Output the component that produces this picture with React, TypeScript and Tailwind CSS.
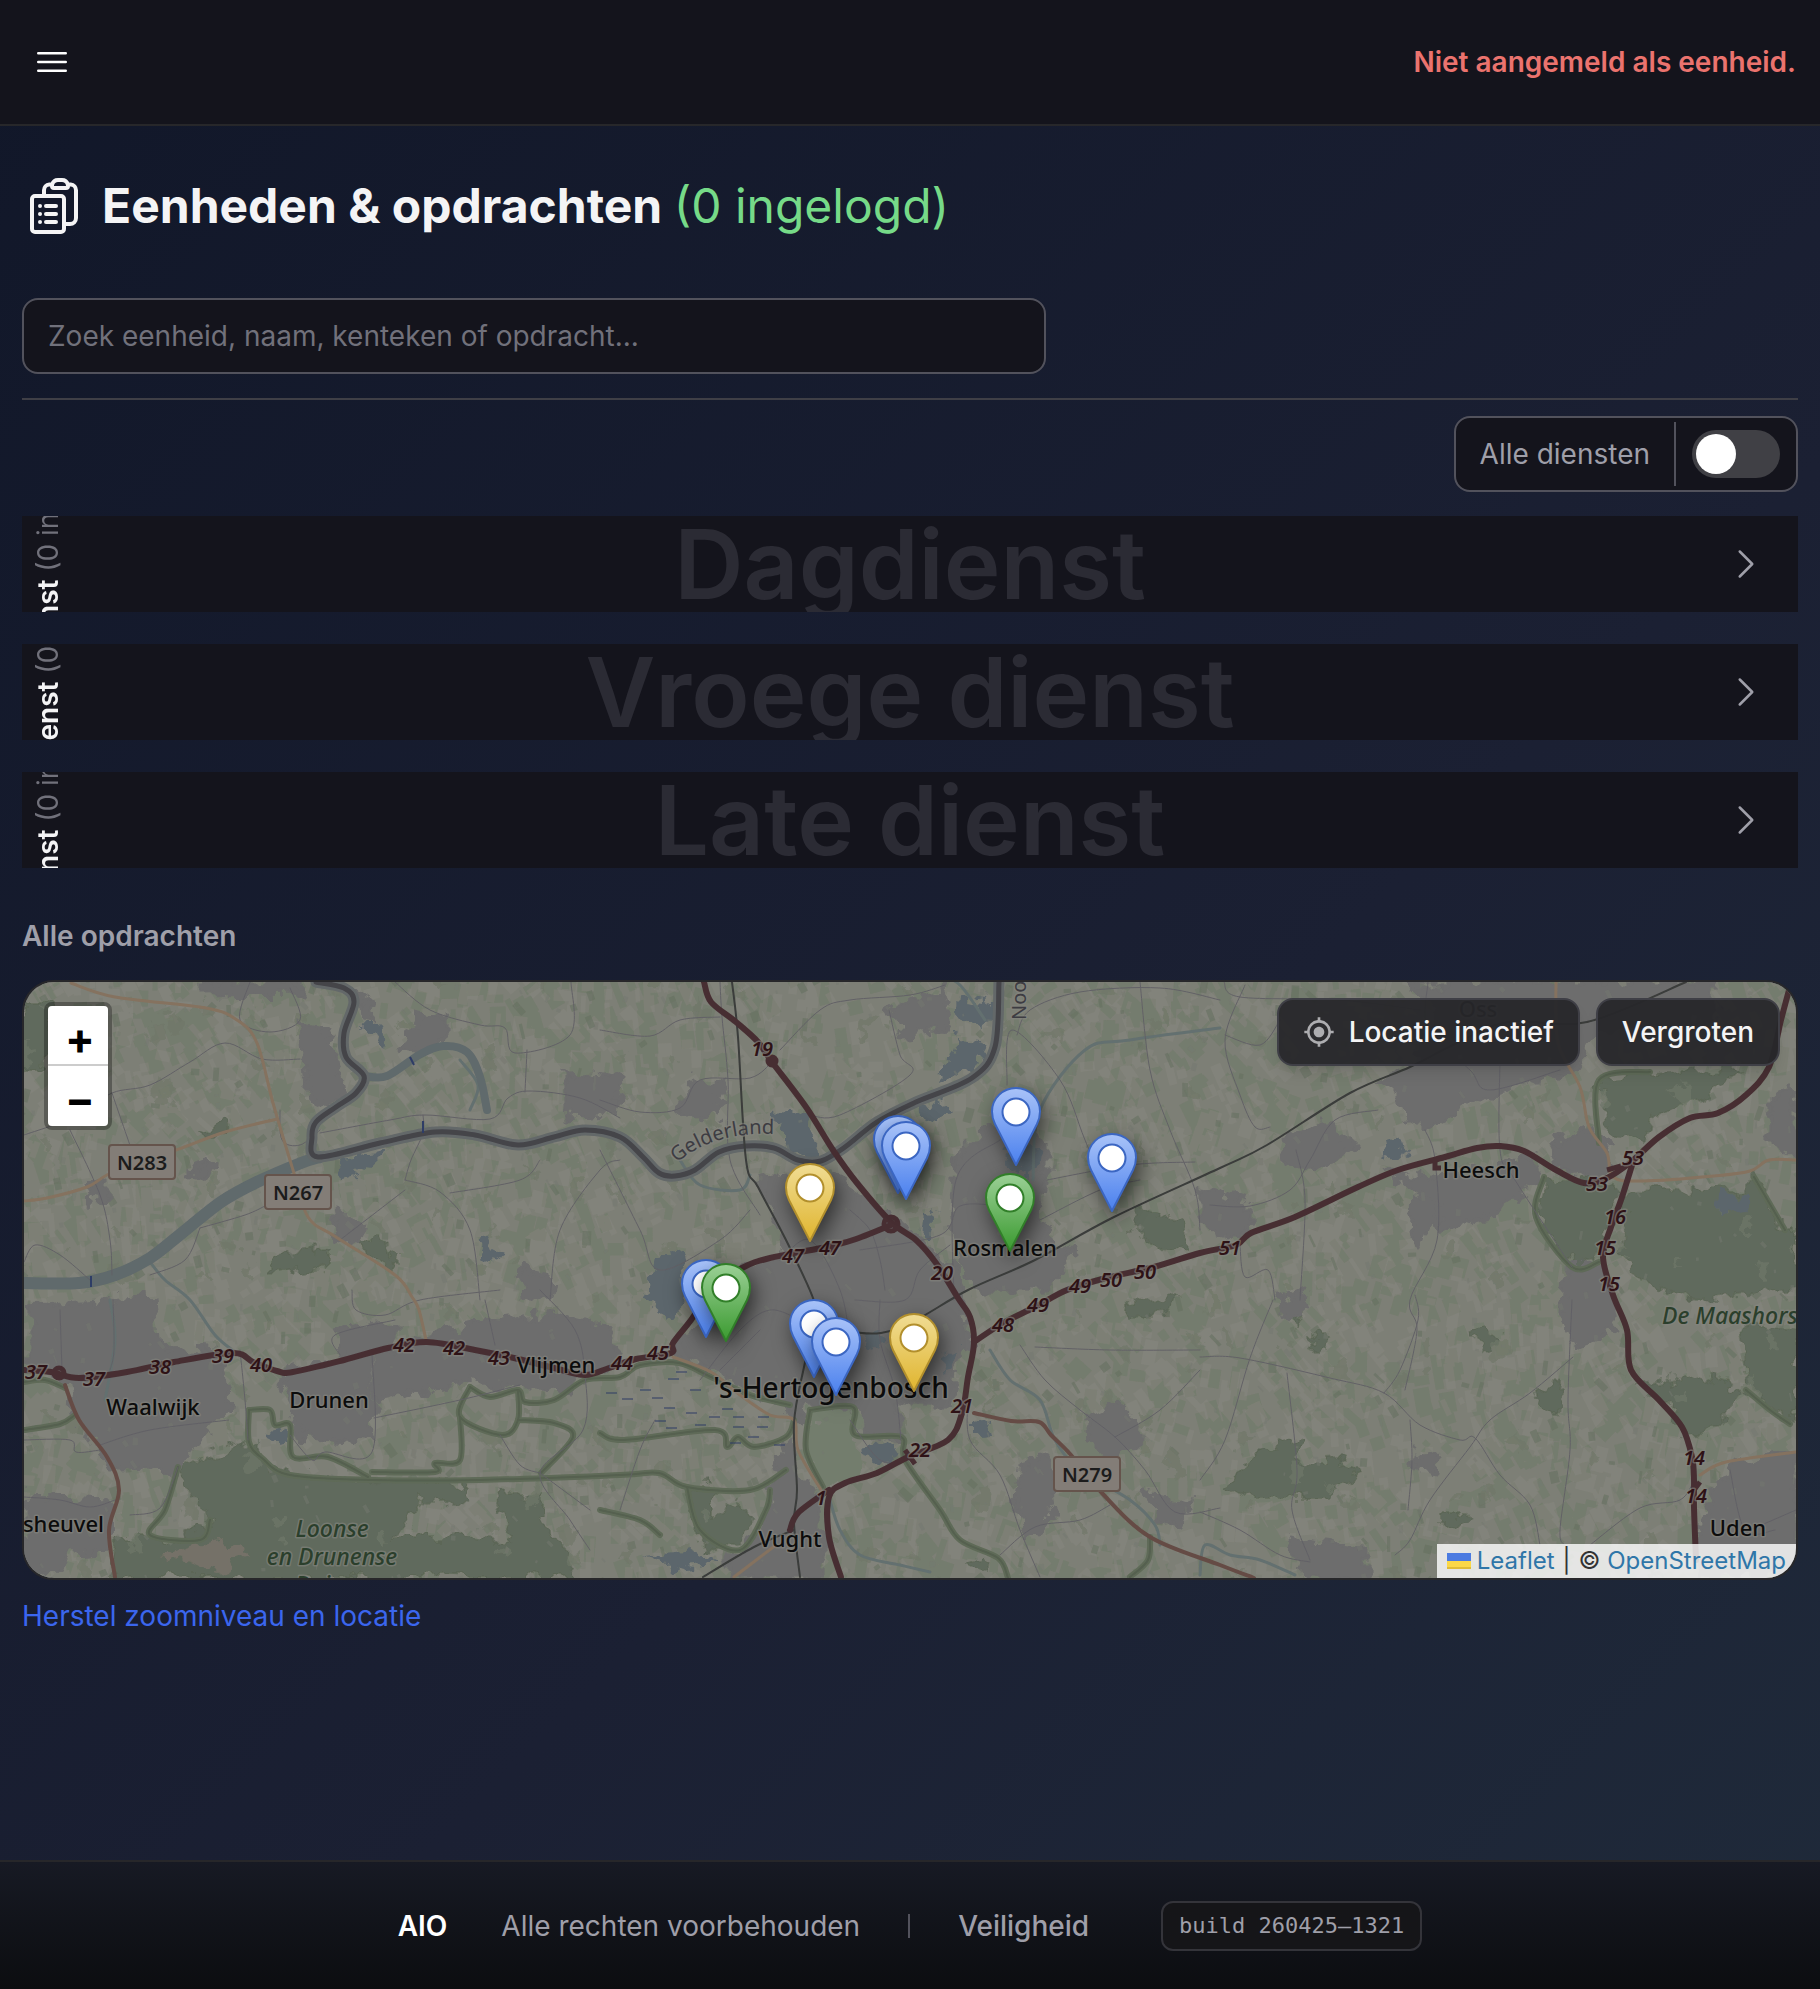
import { useState } from "react";
import {
  HiOutlineBars3,
  HiOutlineChevronRight,
  HiOutlineClipboardDocumentList,
} from "react-icons/hi2";
import { MdMyLocation } from "react-icons/md";

type Pt = [number, number];

/* The map is drawn in its own coordinate space; pins share the same space. */
const MAP = { x: 24, y: 982, w: 1772, h: 596 };

function pts(s: string): Pt[] {
  return s
    .trim()
    .split(/\s+/)
    .map((p) => p.split(",").map(Number) as Pt);
}

/* Catmull-Rom spline through the given points. */
function curve(s: string): string {
  const p = pts(s);
  let d = `M${p[0][0]} ${p[0][1]}`;
  for (let i = 0; i < p.length - 1; i++) {
    const a = p[Math.max(0, i - 1)];
    const b = p[i];
    const c = p[i + 1];
    const e = p[Math.min(p.length - 1, i + 2)];
    const x1 = b[0] + (c[0] - a[0]) / 6;
    const y1 = b[1] + (c[1] - a[1]) / 6;
    const x2 = c[0] - (e[0] - b[0]) / 6;
    const y2 = c[1] - (e[1] - b[1]) / 6;
    d += `C${x1.toFixed(1)} ${y1.toFixed(1)} ${x2.toFixed(1)} ${y2.toFixed(1)} ${c[0]} ${c[1]}`;
  }
  return d;
}

function rng(seed: number) {
  let s = seed;
  return () => {
    s = (s * 1664525 + 1013904223) % 4294967296;
    return s / 4294967296;
  };
}

/* Patchwork of farm fields: strips of small parcels, rotated per block. */
function makeFields(seed: number, density: number, scale: number): string {
  const r = rng(seed);
  let d = "";
  for (let by = MAP.y - 20; by < MAP.y + MAP.h + 20; by += 48) {
    for (let bx = MAP.x - 20; bx < MAP.x + MAP.w + 20; bx += 54) {
      const ang = (r() - 0.5) * 1.2 - 0.25;
      const c = Math.cos(ang);
      const n = Math.sin(ang);
      const count = Math.floor(density * (0.4 + r()));
      for (let i = 0; i < count; i++) {
        const ox = bx + r() * 54;
        const oy = by + r() * 48;
        const w = (4 + r() * 11) * scale;
        const h = (6 + r() * 20) * scale;
        const q = [
          [0, 0],
          [w, 0],
          [w, h],
          [0, h],
        ].map(([x, y]) => `${(ox + x * c - y * n).toFixed(1)} ${(oy + x * n + y * c).toFixed(1)}`);
        d += `M${q.join("L")}Z`;
      }
    }
  }
  return d;
}

const greenFields = makeFields(11, 9, 1.1);
const lightFields = makeFields(47, 9, 1);
const darkFields = makeFields(83, 1.7, 0.6);
const houseSpecks = makeFields(29, 2, 0.35);
const groveSpecks = makeFields(61, 1.2, 0.9);

const urban = [
  "31,1307 158,1297 162,1347 221,1353 229,1407 174,1470 119,1472 71,1413 65,1377 31,1367",
  "24,1497 111,1500 107,1550 70,1552 60,1570 24,1573",
  "277,1373 372,1353 374,1443 300,1437 293,1417 285,1390",
  "336,1330 395,1323 395,1350 340,1357",
  "443,1330 554,1313 605,1327 620,1357 593,1373 561,1393 522,1390 467,1380 376,1400 376,1357",
  "758,1177 821,1170 891,1217 924,1243 956,1270 970,1340 956,1373 952,1403 901,1403 901,1437 869,1440 853,1407 810,1407 798,1423 758,1390 711,1370 675,1360 679,1343 711,1303 740,1270 785,1250",
  "956,1157 991,1120 1047,1137 1047,1183 1039,1223 1071,1253 1047,1290 980,1290 956,1263 952,1203",
  "679,1110 695,1080 723,1083 715,1113 690,1122",
  "889,1010 944,987 952,1030 901,1033",
  "1406,982 1714,982 1714,1022 1595,1030 1580,1067 1493,1093 1425,1130 1378,1083 1410,1067 1440,1010",
  "1386,1173 1429,1180 1536,1157 1540,1183 1489,1217 1437,1227 1429,1203",
  "1283,1137 1327,1120 1354,1147 1319,1170 1287,1167",
  "1200,1187 1251,1203 1251,1230 1224,1240 1200,1220",
  "1556,1140 1591,1127 1611,1157 1595,1183 1556,1165",
  "1769,1097 1796,1087 1796,1157 1769,1143",
  "1564,1267 1600,1265 1619,1330 1576,1347 1560,1317",
  "1710,1497 1730,1463 1796,1453 1796,1577 1698,1577 1698,1543",
  "1291,1540 1330,1545 1366,1547 1366,1577 1303,1577",
  "1019,1467 1051,1457 1055,1507 1031,1537 1015,1503",
  "1086,1417 1118,1403 1146,1437 1114,1463 1088,1443",
  "1142,1490 1190,1505 1180,1525 1155,1515",
  "794,1470 821,1497 821,1577 734,1577 727,1560 766,1523 770,1490 786,1437",
  "301,1023 328,1027 344,1097 320,1110 304,1077",
  "356,990 376,1007 372,1023 358,1020",
  "415,1013 447,1017 447,1037 420,1052 399,1050",
  "565,1077 600,1074 620,1080 617,1113 565,1117",
  "190,1167 221,1157 221,1170 190,1180",
  "332,1210 364,1227 360,1243 336,1237",
  "87,1183 107,1180 107,1203 91,1200",
  "522,1270 554,1277 550,1297 524,1300",
  "202,982 300,982 300,995 202,996",
  "1412,1197 1440,1200 1420,1250 1410,1235",
  "1416,1452 1440,1455 1438,1475 1414,1470",
  "1280,1300 1305,1290 1310,1310 1285,1322",
];

const forest = [
  "178,1467 249,1442 277,1470 372,1480 474,1483 470,1503 420,1500 410,1520 395,1537 455,1537 514,1543 494,1493 538,1497 538,1523 561,1540 577,1577 111,1577 115,1540 170,1540 213,1523 205,1505 190,1497",
  "1544,1177 1611,1183 1615,1207 1599,1260 1572,1267 1536,1217",
  "1627,1187 1742,1190 1754,1177 1785,1230 1796,1230 1796,1290 1700,1300 1640,1280 1620,1250",
  "1635,1387 1700,1375 1746,1390 1730,1410 1710,1433 1690,1435 1668,1405",
  "1740,1320 1796,1330 1796,1423 1770,1410 1746,1380",
  "1599,1080 1742,1067 1702,1100 1651,1117 1647,1143 1610,1140",
  "1259,1450 1298,1440 1298,1462 1338,1460 1358,1477 1327,1497 1255,1497 1228,1487",
  "273,1257 328,1247 328,1267 273,1273",
  "356,1240 376,1240 399,1257 395,1268 370,1256",
  "24,1003 51,1003 47,1070 24,1070",
  "1140,1210 1180,1220 1190,1245 1160,1250 1135,1235",
  "1470,1330 1492,1327 1500,1342 1485,1352",
  "1310,1333 1326,1333 1320,1355 1312,1352",
  "1535,1390 1560,1385 1558,1415 1540,1408",
  "1440,1512 1468,1512 1465,1527 1440,1522",
  "200,1130 222,1122 225,1135 207,1140",
  "687,1490 712,1488 712,1518 740,1500 752,1520 730,1548 706,1550 690,1520",
  "1130,1302 1178,1298 1168,1316 1128,1318",
  "1290,1310 1302,1308 1296,1330",
  "970,1560 992,1556 990,1574 972,1570",
];

const water = [
  "774,1112 800,1110 812,1122 806,1135 818,1150 810,1160 790,1155 786,1135",
  "960,997 985,1000 993,1018 985,1030 958,1025",
  "956,1036 980,1038 987,1055 970,1072 942,1078",
  "922,1105 945,1100 950,1110 935,1127 920,1118",
  "655,1255 680,1250 690,1290 671,1322 646,1300",
  "859,1447 893,1442 900,1457 873,1467",
  "643,1557 695,1552 718,1563 680,1568",
  "975,1423 990,1420 992,1437 975,1438",
  "1384,1140 1400,1135 1404,1148 1388,1156",
  "1716,1195 1748,1192 1750,1208 1718,1212",
  "480,1240 490,1236 500,1258 486,1262",
  "340,1155 390,1148 360,1175 344,1180",
  "364,1025 376,1025 388,1045 380,1050",
  "265,1435 285,1430 288,1442 270,1445",
  "865,1335 878,1330 880,1345 868,1350",
  "940,1355 958,1350 955,1370 942,1372",
  "925,1210 934,1215 930,1240 922,1235",
  "1005,1150 1040,1145 1035,1175 1012,1172",
];

const minorRoads = [
  "24,1135 80,1115 112,1093 150,1085 190,1062 225,1043 262,1059 300,1059",
  "112,1093 135,1160",
  "70,1130 100,1195 110,1240 112,1275",
  "290,988 300,1020 270,1032 240,1020 250,982",
  "395,982 430,1010 480,1025 505,1028 515,1053 570,1035 571,982",
  "527,1050 525,1092",
  "320,1133 390,1120 425,1115 490,1119 508,1098 530,1091 580,1098 620,1118",
  "423,1115 423,1133 411,1160 405,1180",
  "405,1180 440,1192 470,1230 480,1300",
  "405,1190 340,1240",
  "550,1300 560,1230 600,1170 620,1160",
  "540,1160 520,1180 450,1193",
  "280,1110 282,1140 300,1145 320,1130",
  "200,1228 245,1215 265,1206",
  "24,1262 35,1245 60,1255 90,1280",
  "150,1275 185,1260 200,1228",
  "600,1030 650,1036 680,1020 720,1017",
  "600,1100 640,1112 680,1108 700,1080 750,1078 772,1062",
  "780,1050 820,1010 850,1000 910,995 945,985",
  "889,1010 900,1055 910,1075 840,1115 810,1115",
  "720,982 722,1017 728,1080 730,1160 760,1215",
  "600,1150 640,1230 660,1270 720,1240 750,1210",
  "1017,1035 1030,1010 1080,992 1160,988 1220,1000",
  "1007,1085 1012,1030 1060,1080 1085,1140 1110,1200",
  "1140,982 1150,1070 1170,1130 1195,1190 1200,1230",
  "1047,1180 1130,1165 1195,1162",
  "1040,1220 1100,1190 1140,1180",
  "1224,982 1240,997 1340,1000 1420,1010",
  "1245,985 1225,1040 1240,1095 1255,1127 1270,1127",
  "1280,1020 1260,1045 1225,1035",
  "1428,982 1428,1030 1470,1070 1490,1090 1560,1070",
  "1500,1060 1500,1150 1515,1180 1572,1267",
  "1425,1130 1435,1160 1437,1240 1410,1300 1417,1330 1405,1390",
  "1210,1205 1250,1206 1290,1190 1310,1160 1335,1120 1378,1110",
  "1296,1150 1305,1200 1300,1300",
  "1240,1245 1245,1277 1268,1270 1275,1300",
  "1200,1357 1240,1358 1330,1378 1384,1393 1420,1425 1460,1440 1475,1438 1500,1475 1530,1505 1540,1545",
  "1384,1393 1400,1370 1418,1320 1415,1295",
  "1573,1357 1530,1393 1490,1420 1470,1447 1430,1500 1410,1540 1395,1555",
  "1572,1300 1568,1400 1570,1450 1560,1530 1565,1545",
  "1200,1480 1225,1440 1250,1358 1273,1300",
  "1287,1373 1297,1470 1292,1510 1310,1560",
  "1200,1512 1240,1530 1280,1555 1310,1562",
  "1590,1545 1640,1508 1680,1500 1694,1480",
  "1410,1420 1412,1460 1408,1510",
  "1730,1470 1745,1530 1775,1530",
  "1796,1510 1750,1530",
  "1020,1345 1045,1380 1080,1410 1115,1437 1145,1470 1175,1512 1220,1508",
  "1115,1437 1160,1410 1200,1370",
  "1035,1347 1110,1350 1200,1350",
  "968,1400 970,1440 1000,1475 1020,1530 1040,1577",
  "1000,1555 1035,1527 1080,1520 1110,1505",
  "24,1440 70,1440 76,1452 100,1450",
  "100,1445 150,1430 229,1420",
  "24,1497 60,1500 90,1507 115,1500",
  "130,1515 160,1508 178,1467",
  "240,1350 245,1400 248,1440",
  "374,1418 460,1400 520,1385",
  "290,1435 312,1460 325,1452 372,1452 372,1353",
  "540,1290 575,1330 585,1375 583,1430 540,1473 570,1520 590,1550",
  "352,1290 356,1310 385,1315 420,1300 500,1290",
  "340,1355 335,1335 395,1320",
  "485,1300 495,1345",
  "500,1435 520,1465 540,1473",
  "540,1473 590,1510",
  "700,1380 740,1330 770,1310 800,1320",
  "620,1510 640,1450 655,1420",
  "720,1370 760,1330",
  "850,1210 870,1230 880,1260 885,1290",
  "855,1300 905,1300 920,1270 950,1245",
  "860,1250 940,1235 960,1206 1000,1206",
  "880,1300 880,1340 895,1390 901,1440",
  "954,1300 956,1180 1000,1140",
  "780,1260 810,1240 840,1290 850,1340",
  "850,1420 880,1460 910,1460",
  "60,1310 62,1370",
  "113,1300 114,1350 110,1370",
];

const greenLines = [
  "249,1410 249,1442 262,1458 290,1475 372,1480 480,1480 620,1475 659,1473 687,1487 750,1490 786,1470",
  "470,1387 490,1397 518,1390 525,1402 554,1400 585,1380 620,1377 640,1365 679,1363 711,1377 750,1395 790,1405",
  "470,1387 460,1417 502,1435 518,1420 518,1390",
  "518,1420 554,1423 573,1437 541,1473",
  "460,1417 460,1460 435,1463 435,1472 372,1472",
  "249,1410 270,1410 275,1425 290,1425 293,1457 328,1457 368,1477",
  "600,1433 624,1440 715,1430 727,1447 738,1437 754,1447 786,1437 794,1420",
  "178,1467 165,1510 150,1535 200,1540 210,1520",
  "24,1382 45,1380 65,1388",
  "24,1430 60,1424 75,1415",
  "810,1410 853,1407 855,1435 901,1437 905,1460 940,1510 960,1540 998,1558 1008,1578",
  "810,1410 806,1450 823,1487",
  "687,1487 700,1530 740,1550 766,1510 770,1490",
  "600,1510 640,1520 660,1535",
  "1544,1177 1536,1217 1572,1267 1599,1262",
  "1599,1143 1599,1080 1650,1072",
  "1746,1390 1770,1410 1790,1424",
  "1754,1177 1785,1230",
  "1150,1537 1148,1560 1130,1577",
];

const streams = [
  "1200,1575 1205,1545 1230,1555 1260,1560 1295,1575",
  "1033,1180 1040,1110 1085,1050 1130,1040 1220,1028",
  "985,1020 960,985 940,975",
  "990,1350 1010,1380 1040,1400 1055,1440 1080,1470 1130,1500 1155,1525 1160,1545",
  "829,1497 840,1530 860,1555 900,1565 930,1572",
  "150,1262 165,1280 190,1300 215,1335 235,1352",
  "680,1160 700,1185 740,1190 750,1175",
  "110,1300 115,1340 105,1400",
  "460,1060 478,1085 470,1110",
];

const motorways = [
  "704,982 711,1002 736,1022 758,1042 772,1062 806,1107 833,1150 857,1183 891,1222 916,1240 936,1263 958,1298 970,1317 974,1343 968,1377 962,1413 948,1440 908,1457 877,1473 845,1483 829,1497 829,1537 841,1577",
  "24,1370 51,1372 79,1378 127,1372 174,1362 233,1353 253,1362 277,1371 293,1372 344,1360 388,1348 427,1342 475,1350 514,1358 554,1368 585,1375 609,1368 636,1359 671,1353 673,1343 691,1320 712,1290 742,1268 770,1258 821,1248 853,1240 891,1225",
  "974,1342 1003,1323 1035,1307 1067,1290 1106,1278 1154,1267 1200,1253 1236,1245 1251,1233 1295,1217 1358,1187 1398,1170 1445,1157 1477,1148 1500,1146 1524,1151 1556,1170 1584,1183 1607,1178 1631,1162 1659,1137 1690,1118 1718,1113 1746,1095 1769,1067 1781,1020 1789,990",
  "1633,1162 1621,1200 1611,1227 1603,1257 1613,1295 1627,1330 1631,1370 1659,1400 1682,1427 1692,1457 1694,1480 1694,1507 1696,1560",
  "829,1490 798,1513 790,1530",
];

const brownRoads = [
  "65,1385 79,1420 107,1457 119,1490 109,1530 115,1577",
  "974,1413 1011,1421 1039,1422 1051,1435 1071,1455 1102,1493 1150,1537 1220,1565 1254,1578",
];

const tanRoads = [
  "71,983 115,997 206,1008 237,1020 257,1043 273,1103 293,1170 308,1217 336,1237 395,1275 412,1297 419,1310 426,1340",
  "24,1201 47,1198 87,1187 107,1175 142,1160 176,1150 225,1132 277,1119",
  "1556,982 1558,1043 1580,1087 1589,1127 1607,1153 1613,1177 1643,1181 1714,1176 1750,1171 1769,1160 1796,1160",
  "1700,1475 1726,1462 1796,1452",
  "673,1357 711,1372 740,1395 770,1415 794,1420 798,1450 821,1490",
  "776,1545 734,1577",
];

const rails = [
  "732,982 738,1037 746,1160 758,1187 786,1240 813,1298 815,1320 804,1367 794,1423 797,1490 794,1523 800,1577",
  "813,1317 845,1330 881,1333 916,1320 968,1290 1035,1260 1114,1217 1220,1168 1267,1145 1350,1093 1410,1067 1453,1045 1508,1022 1587,1022 1686,982",
  "794,1530 754,1547 703,1577",
];

const border =
  "316,982 344,988 354,1002 344,1033 346,1057 364,1076 356,1093 336,1107 316,1122 312,1137 318,1157 380,1143 435,1132 475,1135 518,1145 554,1137 585,1130 620,1137 643,1157 659,1173 675,1176 695,1170 719,1152 746,1146 774,1148 798,1160 821,1161 845,1147 877,1122 916,1102 972,1078 995,1047 999,982";
const meuse =
  "24,1283 79,1283 115,1275 150,1258 182,1233 221,1202 257,1182 301,1163 320,1157";
const oxbow =
  "364,1076 387,1076 419,1055 443,1046 467,1052 480,1077 487,1110";

const exits: [string, number, number][] = [
  ["19", 762, 1048], ["47", 793, 1255], ["47", 830, 1247], ["20", 942, 1272],
  ["49", 1080, 1285], ["50", 1111, 1279], ["50", 1145, 1271], ["49", 1038, 1304],
  ["48", 1003, 1324], ["51", 1230, 1247], ["53", 1633, 1157], ["53", 1597, 1183],
  ["16", 1615, 1216], ["15", 1605, 1247], ["15", 1609, 1283], ["14", 1694, 1457],
  ["14", 1696, 1495], ["21", 962, 1405], ["22", 920, 1449], ["1", 821, 1497],
  ["37", 36, 1371], ["37", 94, 1378], ["38", 160, 1366], ["39", 223, 1355],
  ["40", 261, 1364], ["42", 404, 1344], ["42", 454, 1347], ["43", 499, 1357],
  ["44", 622, 1362], ["45", 658, 1352],
];

const towns: [string, number, number][] = [
  ["Waalwijk", 153, 1414], ["Drunen", 329, 1407], ["Vlijmen", 556, 1372],
  ["Vught", 790, 1546], ["Heesch", 1481, 1177], ["Uden", 1738, 1535],
  ["Rosmalen", 1005, 1255], ["Oss", 1478, 1016],
];

const shields: [string, number, number][] = [
  ["N283", 109, 1145],
  ["N267", 265, 1175],
  ["N279", 1054, 1457],
];

const marsh: Pt[] = [
  [606, 1393], [622, 1399], [652, 1398], [676, 1372], [668, 1379], [690, 1390], [686, 1413],
  [664, 1408], [722, 1409], [709, 1417], [733, 1417], [758, 1417], [695, 1425], [733, 1427],
  [757, 1427], [666, 1428], [730, 1443], [748, 1437], [774, 1445], [655, 1421], [640, 1390],
];

function Lines({ items, stroke, width }: { items: string[]; stroke: string; width: number }) {
  return (
    <g fill="none" stroke={stroke} strokeWidth={width} strokeLinecap="round" strokeLinejoin="round">
      {items.map((s) => (
        <path key={s} d={curve(s)} />
      ))}
    </g>
  );
}

function MapCanvas() {
  return (
    <svg
      className="absolute inset-0 h-full w-full"
      viewBox={`${MAP.x} ${MAP.y} ${MAP.w} ${MAP.h}`}
      preserveAspectRatio="none"
      fontFamily="'Noto Sans', 'Open Sans', sans-serif"
      aria-label="Kaart van 's-Hertogenbosch en omgeving"
      role="img"
    >
      <defs>
        <linearGradient id="pin-blue" x1="0" y1="0" x2="0" y2="1">
          <stop offset="0" stopColor="#a9c3f8" />
          <stop offset="1" stopColor="#4a80ee" />
        </linearGradient>
        <linearGradient id="pin-green" x1="0" y1="0" x2="0" y2="1">
          <stop offset="0" stopColor="#9bd096" />
          <stop offset="1" stopColor="#3a9a2f" />
        </linearGradient>
        <linearGradient id="pin-yellow" x1="0" y1="0" x2="0" y2="1">
          <stop offset="0" stopColor="#f0dc94" />
          <stop offset="1" stopColor="#e0b52e" />
        </linearGradient>
        <filter id="soft" x="-5%" y="-5%" width="110%" height="110%">
          <feGaussianBlur stdDeviation="0.7" />
        </filter>
        <filter id="ragged" x="-2%" y="-2%" width="104%" height="104%">
          <feTurbulence type="fractalNoise" baseFrequency="0.06" numOctaves="3" seed="4" result="n" />
          <feDisplacementMap in="SourceGraphic" in2="n" scale="26" xChannelSelector="R" yChannelSelector="G" />
        </filter>
      </defs>
      <rect x={MAP.x} y={MAP.y} width={MAP.w} height={MAP.h} fill="#7d7f76" />
      <g filter="url(#soft)">
        <path d={greenFields} fill="#737c6c" fillOpacity="0.75" />
        <path d={lightFields} fill="#84847c" fillOpacity="0.75" />
        <path d={greenFields} fill="#737c6c" fillOpacity="0.25" />
        <path d={darkFields} fill="#667060" fillOpacity="0.6" />
        <g filter="url(#ragged)">
          <g fill="#616a5d" stroke="#56614f" strokeWidth="2" strokeOpacity="0.5">
            {forest.map((f) => (
              <polygon key={f} points={f} />
            ))}
          </g>
          <path d={groveSpecks} fill="#6f786a" fillOpacity="0.7" />
          <polygon points="158,1557 221,1537 253,1557 213,1570" fill="#747167" />
          <polygon points="812,1410 853,1407 857,1437 861,1475 823,1487 806,1450" fill="#737d6d" />
          <g fill="#6d6d6d" stroke="#6d6d6d" strokeWidth="3" strokeLinejoin="round">
            {urban.map((f) => (
              <polygon key={f} points={f} />
            ))}
          </g>
          <g fill="#5b666c">
            {water.map((f) => (
              <polygon key={f} points={f} />
            ))}
          </g>
        </g>
        <path d={houseSpecks} fill="#747870" fillOpacity="0.5" />
        <Lines items={greenLines} stroke="#5f6b58" width={6} />
        <Lines items={greenLines} stroke="#55604f" width={2} />
        <Lines items={streams} stroke="#64706f" width={3} />
        <Lines items={[meuse]} stroke="#606a6c" width={12} />
        <Lines items={[oxbow]} stroke="#606a6c" width={8} />
        <Lines items={minorRoads} stroke="#626166" width={1} />
        <Lines items={[border]} stroke="#636869" width={11} />
        <Lines items={[border]} stroke="#45444a" width={5} />
        <Lines items={tanRoads} stroke="#85725f" width={3} />
        <Lines items={brownRoads} stroke="#654c45" width={4} />
        <Lines items={rails} stroke="#3a3c3b" width={2} />
        <Lines items={motorways} stroke="#472f33" width={6} />
        <g fill="none" stroke="#472f33" strokeWidth="5">
          <circle cx="891" cy="1224" r="7" />
          <circle cx="772" cy="1061" r="4" />
          <circle cx="59" cy="1373" r="5" />
          <path d="M1607 1170l14 -4M1700 1482l-6 8M905 1450l10 14M1435 1162v6h6M825 1250h10" />
        </g>
        <g stroke="#2f3c66" strokeWidth="1">
          {marsh.map(([x, y]) => (
            <path key={`${x}-${y}`} d={`M${x} ${y}h11`} />
          ))}
          <path d="M91 1276v11M410 1057l4 8M423 1121v12" strokeWidth="2" />
        </g>
      </g>

      <g fontSize="20" fontWeight="600" textAnchor="middle">
        {shields.map(([label, x, y]) => (
          <g key={label}>
            <rect x={x} y={y} width="66" height="34" rx="3" fill="#837d77" stroke="#65544c" strokeWidth="2" />
            <text x={x + 33} y={y + 25} fill="#1c1c1c">
              {label}
            </text>
          </g>
        ))}
      </g>

      <g stroke="#85857f" strokeOpacity="0.6" strokeWidth="3" strokeLinejoin="round" className="[paint-order:stroke]">
        <g fontSize="20" fontStyle="italic" fontWeight="600" fill="#2e1216" textAnchor="middle">
          {exits.map(([n, x, y]) => (
            <text key={`${n}-${x}`} x={x} y={y + 8}>
              {n}
            </text>
          ))}
        </g>
        <g fontSize="22" fontWeight="500" fill="#0c0c0c" textAnchor="middle">
          {towns.map(([n, x, y]) => (
            <text key={n} x={x} y={y + 1}>
              {n}
            </text>
          ))}
          <text x="104" y="1532" textAnchor="end">
            Kaatsheuvel
          </text>
          <text x="831" y="1398" fontSize="28">
            's-Hertogenbosch
          </text>
        </g>
        <g fontSize="23" fontStyle="italic" fontWeight="500" fill="#2b3f2c" textAnchor="middle">
          <text x="332" y="1537">Loonse</text>
          <text x="332" y="1565">en Drunense</text>
          <text x="332" y="1593">Duinen</text>
          <text x="1662" y="1324" textAnchor="start">
            De Maashorst
          </text>
        </g>
        <g fontSize="20" fill="#3d3c42">
          <path id="province-line" d="M677 1163Q712 1132 772 1134" fill="none" stroke="none" />
          <text>
            <textPath href="#province-line">Gelderland</textPath>
          </text>
          <text transform="translate(1026 1020) rotate(-90)">Noord-Brabant</text>
        </g>
      </g>
    </svg>
  );
}

type PinColor = "blue" | "green" | "yellow";

const pinStroke: Record<PinColor, string> = {
  blue: "#3b66c2",
  green: "#317f29",
  yellow: "#b28f2c",
};

const pinFill: Record<PinColor, string> = {
  blue: "url(#pin-blue)",
  green: "url(#pin-green)",
  yellow: "url(#pin-yellow)",
};

const pins: { color: PinColor; x: number; y: number }[] = [
  { color: "blue", x: 1016, y: 1167 },
  { color: "blue", x: 898, y: 1195 },
  { color: "blue", x: 906, y: 1201 },
  { color: "blue", x: 1112, y: 1213 },
  { color: "yellow", x: 810, y: 1243 },
  { color: "green", x: 1010, y: 1253 },
  { color: "blue", x: 706, y: 1339 },
  { color: "green", x: 726, y: 1343 },
  { color: "blue", x: 814, y: 1379 },
  { color: "yellow", x: 914, y: 1393 },
  { color: "blue", x: 836, y: 1397 },
];

function Pin({ color, x, y }: { color: PinColor; x: number; y: number }) {
  return (
    <button
      type="button"
      aria-label="Opdracht op kaart"
      className="absolute h-20 w-[50px] -translate-x-1/2 -translate-y-full drop-shadow-[4px_8px_10px_rgba(0,0,0,0.55)]"
      style={{
        left: `${((x - MAP.x) / MAP.w) * 100}%`,
        top: `${((y - MAP.y) / MAP.h) * 100}%`,
      }}
    >
      <svg viewBox="0 0 50 80" className="h-full w-full" fill={pinFill[color]} stroke={pinStroke[color]}>
        <path
          d="M25 78L4 37C2 33 1 28.500 1 24.500A24 23.500 0 0 1 49 24.500C49 28.500 48 33 46 37Z"
          strokeWidth="2"
          strokeLinejoin="round"
        />
        <circle cx="25" cy="25" r="13.500" fill="#fff" strokeWidth="2" />
      </svg>
    </button>
  );
}

function UkraineFlag() {
  return (
    <svg viewBox="0 0 24 16" className="h-4 w-6" aria-hidden="true">
      <path fill="#4C7BE1" d="M0 0h24v8H0z" />
      <path fill="#FBD848" d="M0 8h24v6H0z" />
      <path fill="#E0BC36" d="M0 14h24v2H0z" />
    </svg>
  );
}

function ShiftBar({ name }: { name: string }) {
  return (
    <button
      type="button"
      aria-expanded="false"
      className="relative flex h-24 w-full items-center justify-center overflow-hidden bg-[#14141c]"
    >
      <span className="absolute inset-y-0 left-1.5 flex items-center justify-center">
        <span className="rotate-180 text-[28px] leading-10 whitespace-nowrap [writing-mode:vertical-rl]">
          <span className="font-semibold text-zinc-100">{name}</span>{" "}
          <span className="text-zinc-500">(0 ingelogd)</span>
        </span>
      </span>
      <span className="text-8xl font-semibold whitespace-nowrap text-[#2b2b34]">{name}</span>
      <HiOutlineChevronRight className="absolute right-8 size-10 text-zinc-400" />
    </button>
  );
}

export default function App() {
  const [all, setAll] = useState(false);
  const mapButton =
    "flex items-center rounded-2xl border-2 border-[#3f3f46] bg-[#27272a]/95 px-6 py-3 text-[28px] leading-10 font-medium text-zinc-100 shadow-lg";

  return (
    <div className="flex min-h-screen flex-col bg-[linear-gradient(135deg,#111729_0%,#1b2033_60%,#1f2a3a_100%)] font-[Inter,sans-serif] text-[28px] leading-10 [font-optical-sizing:none]">
      <header className="flex items-center justify-between border-b-2 border-[#27272a] bg-[#14141c] py-8 pr-6 pl-[22px]">
        <button type="button" aria-label="Menu" className="flex size-[60px] items-center justify-center text-white">
          <HiOutlineBars3 className="size-10" />
        </button>
        <p className="font-semibold text-[#eb736e]">Niet aangemeld als eenheid.</p>
      </header>

      <main className="flex flex-1 flex-col px-[22px] pt-12">
        <h1 className="flex items-center gap-4 text-5xl leading-[64px] font-bold text-zinc-100">
          <HiOutlineClipboardDocumentList className="size-16" />
          <span>
            Eenheden &amp; opdrachten <span className="font-normal text-[#76da88]">(0 ingelogd)</span>
          </span>
        </h1>

        <input
          type="search"
          aria-label="Zoeken"
          placeholder="Zoek eenheid, naam, kenteken of opdracht..."
          className="mt-[60px] h-[76px] w-full max-w-[1024px] rounded-2xl border-2 border-zinc-600 bg-[#14141c] px-6 text-zinc-100 placeholder:text-zinc-500"
        />

        <div className="mt-6 flex justify-end border-t-2 border-[#3f3f46] pt-4">
          <label className="flex h-[76px] items-center rounded-2xl border-2 border-zinc-600 bg-[#14141c] pr-4 text-zinc-400">
            <span className="px-6">Alle diensten</span>
            <span className="mr-4 h-16 w-0.5 bg-zinc-600" />
            <input
              type="checkbox"
              role="switch"
              checked={all}
              onChange={(e) => setAll(e.target.checked)}
              className="relative h-12 w-[88px] appearance-none rounded-full bg-[#404045] before:absolute before:top-1 before:left-1 before:size-10 before:rounded-full before:bg-white checked:bg-blue-600 checked:before:left-11"
            />
          </label>
        </div>

        <section className="mt-6 flex flex-col gap-8">
          <ShiftBar name="Dagdienst" />
          <ShiftBar name="Vroege dienst" />
          <ShiftBar name="Late dienst" />
        </section>

        <h2 className="mt-12 font-semibold text-zinc-400">Alle opdrachten</h2>
        <div className="relative mt-6 h-[600px] overflow-hidden rounded-[32px] border-2 border-[#27272a]">
          <MapCanvas />
          {pins.map((p) => (
            <Pin key={`${p.x}-${p.y}`} {...p} />
          ))}
          <div className="absolute top-5 left-5 flex flex-col rounded-lg border-4 border-black/30 bg-clip-padding font-bold text-black">
            <button
              type="button"
              aria-label="Inzoomen"
              className="flex size-[60px] items-center justify-center rounded-t border-b-2 border-[#ccc] bg-white pt-1.5 pl-1 text-[44px]"
            >
              +
            </button>
            <button
              type="button"
              aria-label="Uitzoomen"
              className="flex size-[60px] items-center justify-center rounded-b bg-white pt-1.5 pl-1 text-[44px]"
            >
              −
            </button>
          </div>
          <div className="absolute top-4 right-4 flex gap-4">
            <button type="button" className={mapButton}>
              <MdMyLocation className="mr-3.5 size-8 text-[#adadb0]" />
              Locatie inactief
            </button>
            <button type="button" className={mapButton}>
              Vergroten
            </button>
          </div>
          <div className="absolute right-0 bottom-0 flex h-[34px] items-center gap-2 bg-white/80 px-2.5 text-2xl leading-8 text-[#333]">
            <a href="#leaflet" className="flex items-center gap-1.5 text-[#2f76a8]">
              <UkraineFlag />
              Leaflet
            </a>
            <span>|</span>
            <span>
              ©{" "}
              <a href="#osm" className="text-[#2f76a8]">
                OpenStreetMap
              </a>
            </span>
          </div>
        </div>
        <button type="button" className="mt-4 self-start text-[#3b66ee]">
          Herstel zoomniveau en locatie
        </button>
      </main>

      <footer className="flex items-center justify-center border-t-2 border-[#27272a] bg-linear-to-b from-[#171a24] to-[#0c0d10] pt-[39px] pb-[38px] text-zinc-400">
        <span className="font-semibold text-white">AIO</span>
        <span className="ml-[54px]">Alle rechten voorbehouden</span>
        <span className="mx-12 h-6 w-0.5 bg-zinc-600" />
        <a href="#veiligheid" className="font-medium">
          Veiligheid
        </a>
        <span className="ml-[72px] flex h-[50px] items-center rounded-xl border-2 border-[#34343a] bg-[#151518] px-4 font-[DejaVu_Sans_Mono,monospace] text-[22px] leading-8">
          build 260425–1321
        </span>
      </footer>
    </div>
  );
}
